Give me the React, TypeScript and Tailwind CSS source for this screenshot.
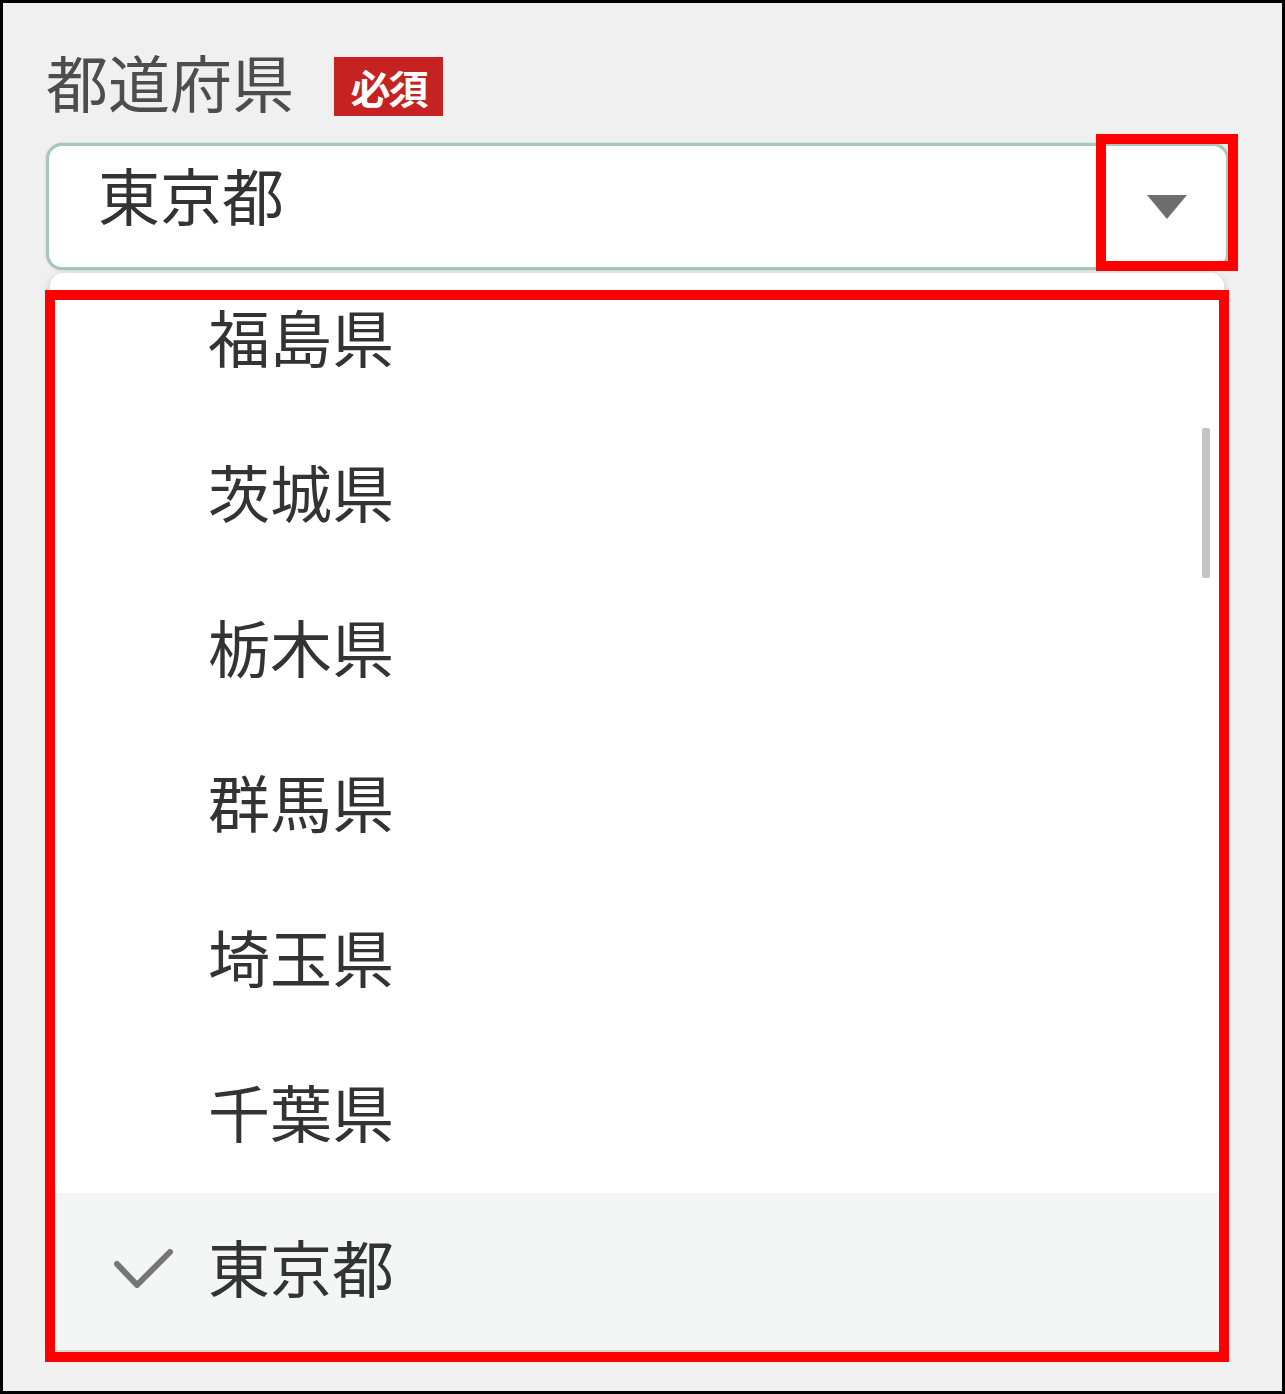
import React from "react";

const prefectures = ["福島県", "茨城県", "栃木県", "群馬県", "埼玉県", "千葉県", "東京都"];
const selected = "東京都";

const font = { fontFamily: '"Noto Sans CJK JP", "Noto Sans", sans-serif' };

const Check: React.FC = () => (
  <svg width="60" height="44" viewBox="0 0 60 44">
    <polyline
      points="3,15 23,36 56,3"
      fill="none"
      stroke="#767676"
      strokeWidth="6"
      strokeLinecap="round"
      strokeLinejoin="round"
    />
  </svg>
);

const App: React.FC = () => {
  return (
    <div
      className="relative w-[1285px] h-[1394px] border-[3px] border-black bg-[#f0f0f0] pl-[43px] pr-[53px] pt-[54px] overflow-hidden"
      style={font}
    >
      {/* label row */}
      <div className="flex items-center gap-[40px] h-[59px]">
        <span className="text-[62px] leading-none text-[#4d4d4d] mb-[12px]">都道府県</span>
        <span className="flex items-center justify-center w-[109px] h-[59px] bg-[#c62222] text-white text-[40px] font-bold leading-none tracking-[-2px]">
          必須
        </span>
      </div>

      {/* select box */}
      <div className="mt-[27px] h-[127px] rounded-[16px] border-[3px] border-[#a6c9b7] bg-white flex items-center justify-between pl-[49px] pr-[38px] shadow-[0_0_2px_rgba(120,170,145,0.6)]">
        <span className="text-[62px] leading-none text-[#333] mb-[26px]">東京都</span>
        <svg width="42" height="26" viewBox="0 0 42 26">
          <polygon points="1,1 41,1 21,25" fill="#6e6e6e" strokeLinejoin="round" />
        </svg>
      </div>

      {/* dropdown panel */}
      <div className="mt-[3px] ml-[4px] mr-[5px] h-[1077px] bg-white rounded-t-[14px] overflow-hidden relative shadow-[0_2px_8px_rgba(0,0,0,0.18)]">
        <div className="-mt-[10px] flex flex-col">
          {prefectures.map((name) => (
            <div
              key={name}
              className={`h-[155px] flex items-center gap-[34px] pl-[64px] ${
                name === selected ? "bg-[#f3f6f5]" : "bg-white"
              }`}
            >
              <div className="w-[60px] flex items-center">{name === selected && <Check />}</div>
              <span className="text-[62px] leading-none text-[#333] mb-[10px]">{name}</span>
            </div>
          ))}
          <div className="h-[10px] bg-[#f3f6f5]" />
        </div>
        {/* scrollbar thumb */}
        <div className="absolute right-[14px] top-[155px] w-[8px] h-[150px] bg-[#c4c4c4] rounded-[2px]" />
      </div>

      {/* annotation boxes */}
      <div className="absolute left-[1093px] top-[131px] w-[142px] h-[137px] border-[10px] border-[#ff0000]" />
      <div className="absolute left-[42px] top-[287px] w-[1184px] h-[1072px] border-[10px] border-[#ff0000]" />
    </div>
  );
};

export default App;
